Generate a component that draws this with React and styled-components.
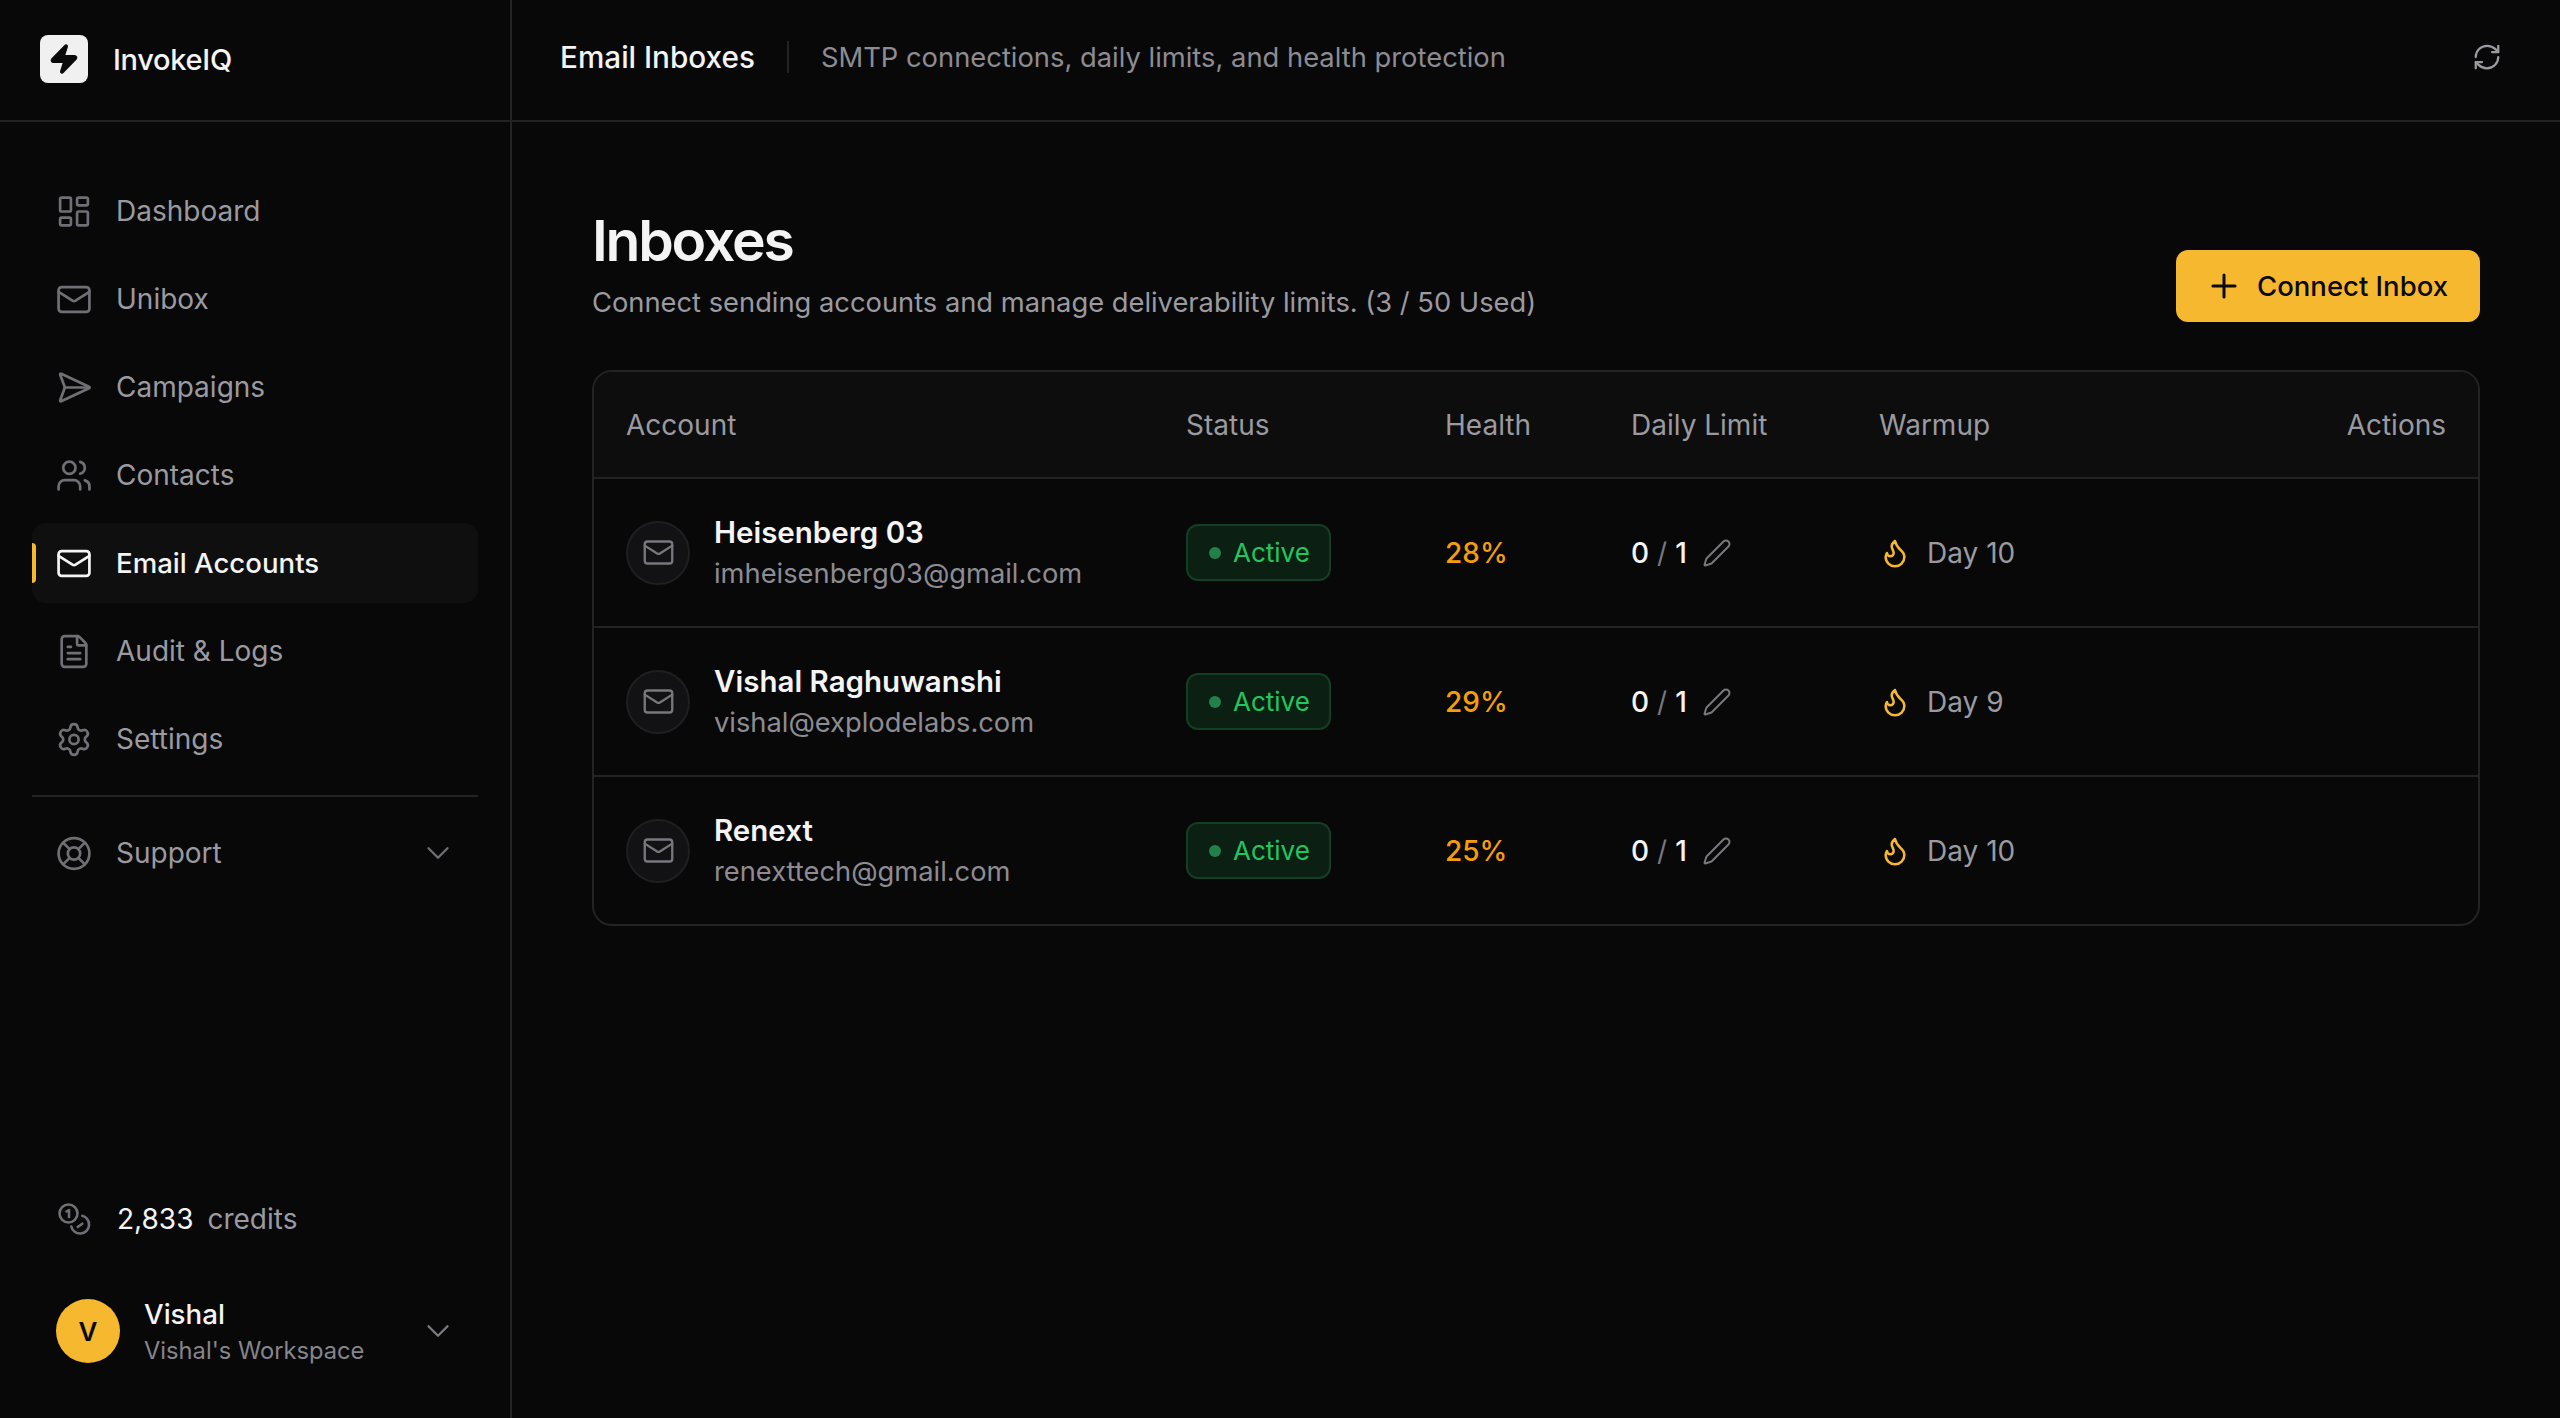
import React from "react";
import styled, { createGlobalStyle } from "styled-components";
import {
  LayoutDashboard,
  Mail,
  SendHorizontal,
  Users,
  FileText,
  Settings,
  LifeBuoy,
  ChevronDown,
  RefreshCw,
  Plus,
  Pen,
  Flame,
  Zap,
} from "lucide-react";

const GlobalStyle = createGlobalStyle`
  html, body {
    margin: 0;
    padding: 0;
    background: #080809;
  }
  body {
    font-family: Inter, "Liberation Sans", sans-serif;
    color: #f4f4f5;
    -webkit-font-smoothing: antialiased;
  }
  * { box-sizing: border-box; }
`;

const Shell = styled.div`
  display: flex;
  width: 2560px;
  height: 1418px;
  background: #080809;
  overflow: hidden;
`;

const Sidebar = styled.aside`
  width: 512px;
  flex: none;
  display: flex;
  flex-direction: column;
  border-right: 2px solid #232325;
`;

const Brand = styled.div`
  height: 122px;
  flex: none;
  display: flex;
  align-items: center;
  gap: 25px;
  padding: 0 0 2px 40px;
  border-bottom: 2px solid #232325;
`;

const LogoBox = styled.div`
  width: 48px;
  height: 48px;
  border-radius: 8px;
  background: #f0f0f0;
  display: flex;
  align-items: center;
  justify-content: center;
  color: #0a0a0a;
`;

const BrandName = styled.span`
  font-size: 29px;
  font-weight: 500;
  letter-spacing: -0.3px;
  color: #f4f4f5;
`;

const Nav = styled.nav`
  display: flex;
  flex-direction: column;
  gap: 8px;
  padding: 49px 32px 0;
`;

const NavItem = styled.div`
  position: relative;
  height: 80px;
  display: flex;
  align-items: center;
  gap: 22px;
  padding: 0 26px 0 22px;
  border-radius: 14px;
  font-size: ${(props) => (props.$active ? "27.6px" : "28px")};
  font-weight: ${(props) => (props.$active ? 500 : 400)};
  color: ${(props) => (props.$active ? "#f4f4f5" : "#9a9aa0")};
  background: ${(props) => (props.$active ? "#0f0f10" : "transparent")};

  svg {
    flex: none;
    width: 40px;
    color: ${(props) => (props.$active ? "#f4f4f5" : "#6f6f75")};
  }
`;

const ActiveBar = styled.span`
  position: absolute;
  left: 0;
  top: 20px;
  width: 4px;
  height: 40px;
  border-radius: 0 4px 4px 0;
  background: #f5b82e;
`;

const NavDivider = styled.div`
  height: 2px;
  background: #232325;
  margin: 8px 0;
`;

const Chevron = styled(ChevronDown)`
  margin-left: auto;
  margin-right: -6px;
  color: #7a7a80;
`;

const SidebarFoot = styled.div`
  margin-top: auto;
  padding: 0 24px 52px;
  display: flex;
  flex-direction: column;
  gap: 57px;
`;

const Credits = styled.div`
  display: flex;
  align-items: center;
  gap: 23px;
  padding-left: 30px;
  font-size: 28px;
  color: #9a9aa0;

  svg {
    color: #6f6f75;
  }
`;

const CreditCount = styled.span`
  color: #f4f4f5;
  margin-right: 14px;
`;

const UserRow = styled.div`
  display: flex;
  align-items: center;
  gap: 24px;
  padding: 0 35px 0 32px;
`;

const Avatar = styled.div`
  width: 64px;
  height: 64px;
  border-radius: 50%;
  flex: none;
  background: #f5b82e;
  color: #0a0a0a;
  display: flex;
  align-items: center;
  justify-content: center;
  font-size: 26px;
  font-weight: 600;
`;

const UserText = styled.div`
  display: flex;
  flex-direction: column;
  gap: 5px;
  padding-top: 1px;
`;

const UserName = styled.span`
  font-size: 27.7px;
  line-height: 34px;
  font-weight: 500;
  color: #f4f4f5;
`;

const UserOrg = styled.span`
  font-size: 23.7px;
  line-height: 30px;
  color: #85858b;
`;

const Main = styled.main`
  flex: 1;
  min-width: 0;
  display: flex;
  flex-direction: column;
`;

const TopBar = styled.header`
  height: 122px;
  flex: none;
  display: flex;
  align-items: center;
  padding: 0 58px 6px 48px;
  border-bottom: 2px solid #232325;
`;

const TopTitle = styled.span`
  font-size: 29.7px;
  font-weight: 500;
  color: #f4f4f5;
`;

const TopSep = styled.span`
  width: 2px;
  height: 32px;
  background: #232325;
  margin: 0 32px;
`;

const TopSub = styled.span`
  font-size: 27.35px;
  color: #8c8c92;
`;

const RefreshIcon = styled(RefreshCw)`
  margin-left: auto;
  color: #9a9aa0;
`;

const Content = styled.div`
  padding: 86px 80px 0;
  display: flex;
  flex-direction: column;
  gap: 48px;
`;

const PageHead = styled.div`
  display: flex;
  align-items: flex-end;
  justify-content: space-between;
`;

const HeadText = styled.div`
  display: flex;
  flex-direction: column;
  gap: 10px;
`;

const PageTitle = styled.h1`
  margin: 0;
  font-size: 57px;
  line-height: 66px;
  font-weight: 600;
  letter-spacing: -2.2px;
  color: #f4f4f5;
`;

const PageSub = styled.p`
  margin: 0;
  font-size: 27.3px;
  line-height: 38px;
  color: #9a9aa0;
`;

const ConnectButton = styled.button`
  height: 72px;
  padding: 0 32px 0 29px;
  border: 0;
  border-radius: 12px;
  background: #f5b82e;
  color: #0a0a0a;
  display: flex;
  align-items: center;
  gap: 14px;
  font-family: inherit;
  font-size: 27.5px;
  font-weight: 500;
`;

const Table = styled.section`
  border: 2px solid #232325;
  border-radius: 20px;
  overflow: hidden;
`;

const Row = styled.div`
  display: grid;
  grid-template-columns: 560px 259px 186px 248px 1fr auto;
  align-items: center;
  height: 149px;
  padding: 0 32px;
  border-top: 2px solid #232325;
`;

const HeadRow = styled(Row)`
  height: 105px;
  border-top: 0;
  background: #0d0d0e;
  font-size: 28px;
  color: #9a9aa0;
`;

const Account = styled.div`
  display: flex;
  align-items: center;
  gap: 24px;
`;

const AccountIcon = styled.div`
  width: 64px;
  height: 64px;
  border-radius: 50%;
  border: 2px solid #1f1f22;
  background: #121214;
  color: #77777d;
  display: flex;
  align-items: center;
  justify-content: center;
`;

const AccountText = styled.div`
  display: flex;
  flex-direction: column;
  gap: 4px;
`;

const AccountName = styled.span`
  font-size: 29.5px;
  line-height: 38px;
  font-weight: 600;
  color: #f4f4f5;
`;

const AccountEmail = styled.span`
  font-size: 27.3px;
  line-height: 38px;
  color: #8c8c92;
`;

const Badge = styled.span`
  width: 145px;
  height: 57px;
  display: inline-flex;
  align-items: center;
  gap: 12px;
  padding-left: 21px;
  border: 2px solid #123f24;
  border-radius: 12px;
  background: #0c1f13;
  color: #22c55e;
  font-size: 26px;
`;

const Dot = styled.span`
  width: 12px;
  height: 12px;
  border-radius: 50%;
  background: #22804a;
`;

const HealthValue = styled.span`
  font-size: 28px;
  font-weight: 500;
  color: #f59e0b;
`;

const Limit = styled.div`
  display: flex;
  align-items: center;
  gap: 15px;
  font-size: 28px;
  font-weight: 500;
  color: #f4f4f5;

  svg {
    color: #77777d;
  }
`;

const Slash = styled.span`
  color: #77777d;
  font-weight: 400;
  margin: 0 8px;
`;

const Warmup = styled.div`
  display: flex;
  align-items: center;
  gap: 16px;
  font-size: 28px;
  color: #9a9aa0;

  svg {
    color: #f5b82e;
  }
`;

const CoinsIcon = () => (
  <svg width="40" height="40" viewBox="0 0 40 40" fill="none" stroke="currentColor" strokeWidth="2.6" strokeLinecap="round" strokeLinejoin="round">
    <circle cx="14.5" cy="14.5" r="9" />
    <path d="M12.500 12.500 15 11v7" />
    <path d="M28.300 16.800A9 9 0 1 1 17.300 27.500" />
    <path d="M23.700 28l4.600-3.300" />
  </svg>
);

const navItems = [
  { label: "Dashboard", icon: LayoutDashboard },
  { label: "Unibox", icon: Mail },
  { label: "Campaigns", icon: SendHorizontal },
  { label: "Contacts", icon: Users },
  { label: "Email Accounts", icon: Mail, active: true },
  { label: "Audit & Logs", icon: FileText },
  { label: "Settings", icon: Settings },
];

const accounts = [
  { name: "Heisenberg 03", email: "imheisenberg03@gmail.com", health: "28%", day: "Day 10" },
  { name: "Vishal Raghuwanshi", email: "vishal@explodelabs.com", health: "29%", day: "Day 9" },
  { name: "Renext", email: "renexttech@gmail.com", health: "25%", day: "Day 10" },
];

const App = () => {
  return (
    <Shell>
      <GlobalStyle />
      <Sidebar>
        <Brand>
          <LogoBox>
            <Zap size={32} fill="currentColor" strokeWidth={2} />
          </LogoBox>
          <BrandName>InvokeIQ</BrandName>
        </Brand>
        <Nav>
          {navItems.map((item) => {
            const Icon = item.icon;
            return (
              <NavItem key={item.label} $active={item.active}>
                {item.active && <ActiveBar />}
                <Icon size={37} strokeWidth={1.75} />
                {item.label}
              </NavItem>
            );
          })}
          <NavDivider />
          <NavItem>
            <LifeBuoy size={37} strokeWidth={1.75} />
            Support
            <Chevron size={38} strokeWidth={1.5} />
          </NavItem>
        </Nav>
        <SidebarFoot>
          <Credits>
            <CoinsIcon />
            <span>
              <CreditCount>2,833</CreditCount>credits
            </span>
          </Credits>
          <UserRow>
            <Avatar>V</Avatar>
            <UserText>
              <UserName>Vishal</UserName>
              <UserOrg>Vishal's Workspace</UserOrg>
            </UserText>
            <Chevron size={38} strokeWidth={1.5} />
          </UserRow>
        </SidebarFoot>
      </Sidebar>
      <Main>
        <TopBar>
          <TopTitle>Email Inboxes</TopTitle>
          <TopSep />
          <TopSub>SMTP connections, daily limits, and health protection</TopSub>
          <RefreshIcon size={30} strokeWidth={1.8} />
        </TopBar>
        <Content>
          <PageHead>
            <HeadText>
              <PageTitle>Inboxes</PageTitle>
              <PageSub>Connect sending accounts and manage deliverability limits. (3 / 50 Used)</PageSub>
            </HeadText>
            <ConnectButton>
              <Plus size={38} strokeWidth={1.9} />
              Connect Inbox
            </ConnectButton>
          </PageHead>
          <Table>
            <HeadRow>
              <span>Account</span>
              <span>Status</span>
              <span>Health</span>
              <span>Daily Limit</span>
              <span>Warmup</span>
              <span>Actions</span>
            </HeadRow>
            {accounts.map((account) => (
              <Row key={account.email}>
                <Account>
                  <AccountIcon>
                    <Mail size={33} strokeWidth={1.7} />
                  </AccountIcon>
                  <AccountText>
                    <AccountName>{account.name}</AccountName>
                    <AccountEmail>{account.email}</AccountEmail>
                  </AccountText>
                </Account>
                <div>
                  <Badge>
                    <Dot />
                    Active
                  </Badge>
                </div>
                <HealthValue>{account.health}</HealthValue>
                <Limit>
                  <span>
                    0<Slash>/</Slash>1
                  </span>
                  <Pen size={30} strokeWidth={1.6} />
                </Limit>
                <Warmup>
                  <Flame size={32} strokeWidth={1.9} />
                  {account.day}
                </Warmup>
                <span />
              </Row>
            ))}
          </Table>
        </Content>
      </Main>
    </Shell>
  );
};

export default App;
